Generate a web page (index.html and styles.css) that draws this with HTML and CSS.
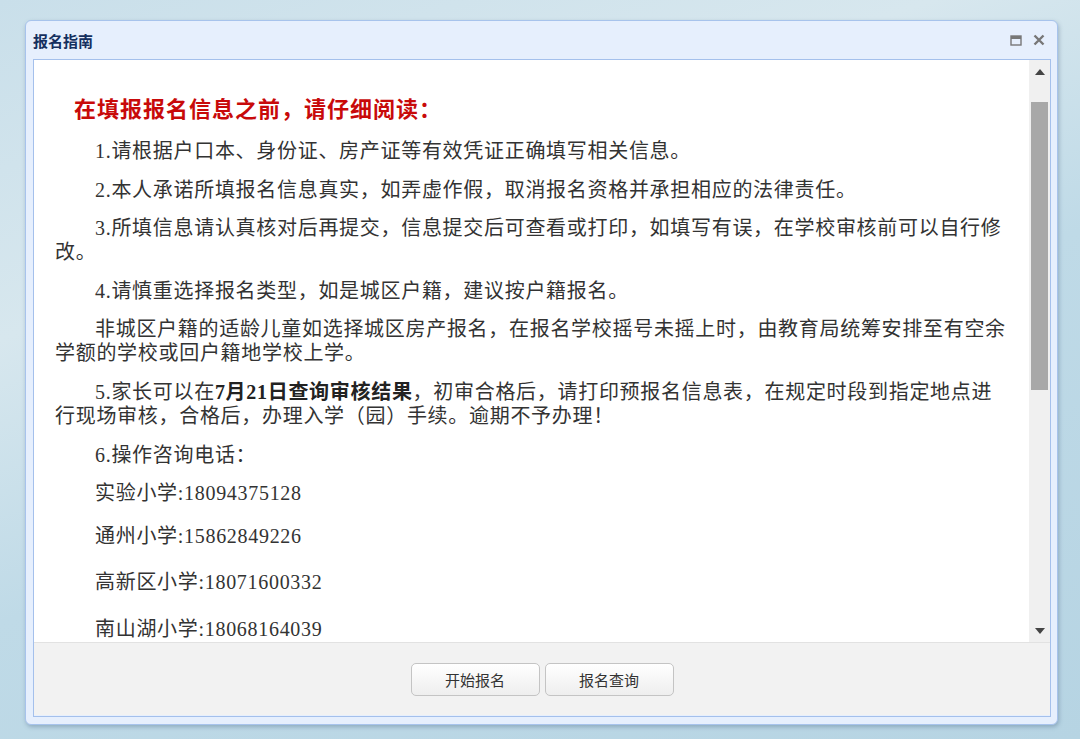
FILE: index.html
```html
<!DOCTYPE html>
<html lang="zh-CN">
<head>
    <meta charset="UTF-8">
    <title>报名指南</title>
    <link rel="stylesheet" href="styles.css">
</head>
<body>
    <div class="win">
        <div class="win-head">
            <span class="win-title">报名指南</span>
            <span class="win-tools">
                <svg width="12" height="11" viewBox="0 0 12 11"><rect x="1" y="1" width="10" height="9" fill="none" stroke="#777" stroke-width="1.4"/><rect x="1" y="1" width="10" height="3" fill="#777"/></svg>
                <svg width="12" height="12" viewBox="0 0 12 12"><path d="M1.5 1.5L10.5 10.5M10.5 1.5L1.5 10.5" stroke="#777" stroke-width="2.4"/></svg>
            </span>
        </div>
        <div class="panel">
            <div class="panel-body">
                <div class="content">
                    <h2 class="notice">在填报报名信息之前，请仔细阅读：</h2>
                    <p class="item">1.请根据户口本、身份证、房产证等有效凭证正确填写相关信息。</p>
                    <p class="item">2.本人承诺所填报名信息真实，如弄虚作假，取消报名资格并承担相应的法律责任。</p>
                    <p class="item">3.所填信息请认真核对后再提交，信息提交后可查看或打印，如填写有误，在学校审核前可以自行修改。</p>
                    <p class="item">4.请慎重选择报名类型，如是城区户籍，建议按户籍报名。</p>
                    <p class="item">非城区户籍的适龄儿童如选择城区房产报名，在报名学校摇号未摇上时，由教育局统筹安排至有空余学额的学校或回户籍地学校上学。</p>
                    <p class="item">5.家长可以在<b>7月21日查询审核结果</b>，初审合格后，请打印预报名信息表，在规定时段到指定地点进行现场审核，合格后，办理入学（园）手续。逾期不予办理！</p>
                    <p class="item">6.操作咨询电话：</p>
                    <p class="item tel">实验小学:18094375128</p>
                    <p class="item tel tel2">通州小学:15862849226</p>
                    <p class="item tel tel3">高新区小学:18071600332</p>
                    <p class="item tel">南山湖小学:18068164039</p>
                </div>
                <div class="scrollbar">
                    <span class="arrow-up"></span>
                    <span class="thumb"></span>
                    <span class="arrow-down"></span>
                </div>
            </div>
            <div class="panel-foot">
                <button class="btn">开始报名</button>
                <button class="btn">报名查询</button>
            </div>
        </div>
    </div>
</body>
</html>
```

FILE: styles.css
```css
html, body{
    margin: 0;
    height: 100%;
}
body{
    overflow: hidden;
    background: linear-gradient(160deg, #c9dfea 0%, #d7e7ee 30%, #bfdae7 55%, #b6d4e3 100%);
    font-family: "Liberation Serif", "Noto Sans CJK SC", serif;
}
.win{
    box-sizing: border-box;
    width: 1033px;
    height: 705px;
    margin: 20px 0 0 25px;
    border: 1px solid #a7c3ec;
    border-radius: 6px;
    background: #e6effd;
    padding: 0 6px 7px 7px;
    box-shadow: 1px 2px 4px rgba(60, 90, 120, 0.35);
}
.win-head{
    height: 38px;
    display: flex;
    align-items: center;
    justify-content: space-between;
}
.win-title{
    font-family: "Noto Sans CJK SC", sans-serif;
    font-size: 15px;
    font-weight: bold;
    color: #15305f;
}
.win-tools{
    display: flex;
    align-items: center;
    gap: 11px;
    padding-right: 6px;
}
.panel{
    border: 1px solid #a4c0ec;
    height: 656px;
}
.panel-body{
    display: flex;
    height: 582px;
    background: #fff;
}
.content{
    flex: 1;
    overflow: hidden;
    padding: 32px 19px 0 21px;
    color: #333;
}
.notice{
    margin: 0 0 17px 19px;
    font-family: "Noto Sans CJK SC", sans-serif;
    font-size: 22px;
    line-height: 30px;
    letter-spacing: 1px;
    color: #c80a0a;
}
.item{
    margin: 0 0 14.6px 0;
    font-size: 20px;
    line-height: 24px;
    letter-spacing: 0.7px;
    text-indent: 40px;
}
.item b{
    color: #222;
}
.tel{
    margin-bottom: 19px;
}
.tel2{
    margin-bottom: 22px;
}
.tel3{
    margin-bottom: 23px;
}
.scrollbar{
    position: relative;
    width: 21px;
    background: #f0f0f0;
}
.arrow-up{
    position: absolute;
    left: 6px;
    top: 9px;
    border-bottom: 6px solid #444;
    border-left: 5px solid transparent;
    border-right: 5px solid transparent;
}
.arrow-down{
    position: absolute;
    left: 6px;
    bottom: 8px;
    border-top: 6px solid #444;
    border-left: 5px solid transparent;
    border-right: 5px solid transparent;
}
.thumb{
    position: absolute;
    left: 2px;
    right: 2px;
    top: 42px;
    height: 288px;
    background: #a8a8a8;
}
.panel-foot{
    height: 73px;
    border-top: 1px solid #e2e2e2;
    background: #f2f2f2;
    display: flex;
    justify-content: center;
    align-items: flex-start;
    gap: 5px;
    padding-top: 20px;
    box-sizing: border-box;
}
.btn{
    width: 129px;
    height: 33px;
    border: 1px solid #c4c4c4;
    border-radius: 5px;
    background: linear-gradient(#ffffff, #eeeeee);
    font-family: "Noto Sans CJK SC", sans-serif;
    font-size: 15px;
    color: #333;
}
```
